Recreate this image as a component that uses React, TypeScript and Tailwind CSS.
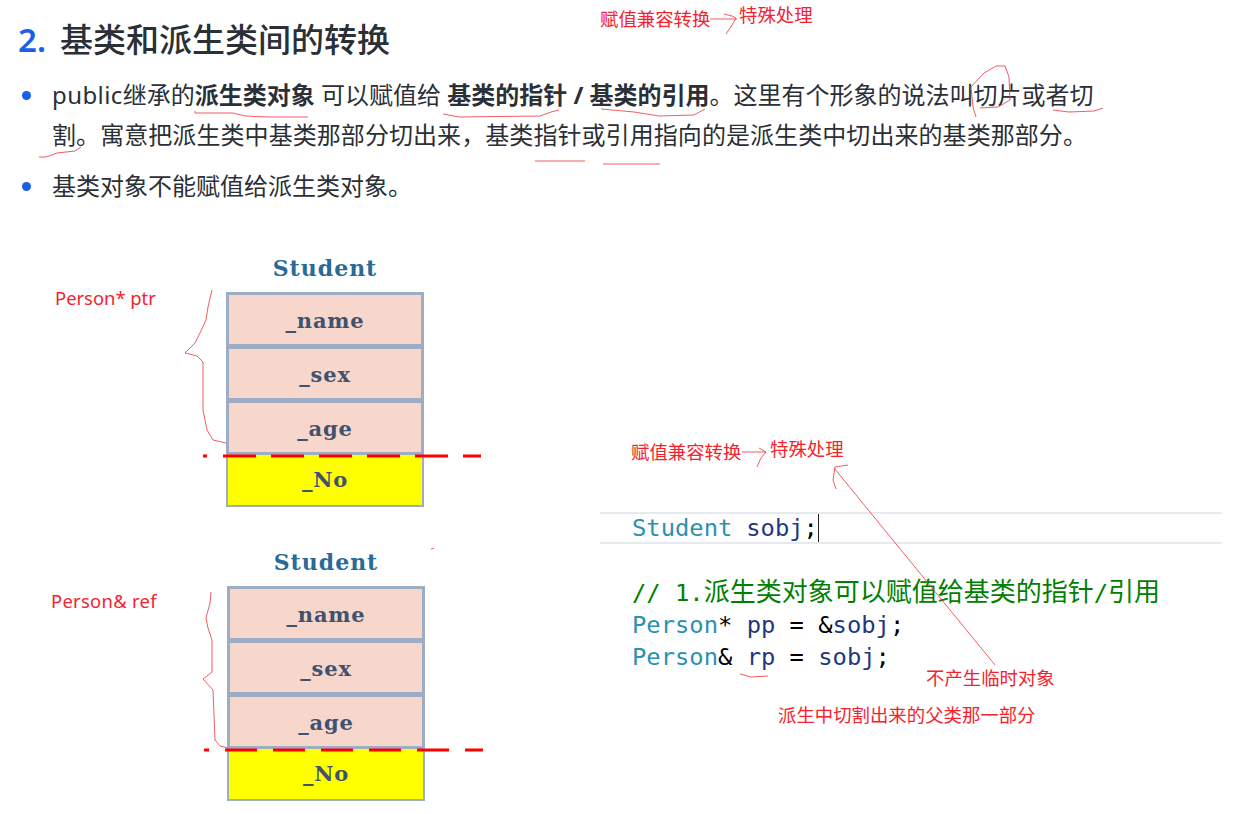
const cjk = '"Noto Sans", "Noto Sans CJK SC", sans-serif'

function StudentBox({ className }: { className: string }) {
  return (
    <div className={`flex w-[198px] flex-col font-['DejaVu_Serif',serif] font-bold ${className}`}>
      <div className="h-[26px] text-center text-[22px] leading-[26px] tracking-[1px] text-[#2a6a96]">Student</div>
      <div className="mt-[11px] flex flex-col text-[21px] tracking-[0.8px] text-[#3f5270]">
        {['_name', '_sex', '_age'].map((name) => (
          <div
            key={name}
            className="-mb-[1px] flex h-[55px] items-center justify-center border-[3px] border-[#9dadc3] bg-[#f7d6cb] pt-[2px]"
          >
            {name}
          </div>
        ))}
        <div className="mt-[1px] flex h-[52px] items-center justify-center border-2 border-t-0 border-[#9dadc3] bg-[#ffff00]">
          _No
        </div>
      </div>
    </div>
  )
}

function Note({ className, children }: { className: string; children: React.ReactNode }) {
  return (
    <span
      className={`absolute text-[18.4px] leading-[24px] whitespace-nowrap text-[#f5222d] ${className}`}
      style={{ fontFamily: cjk }}
    >
      {children}
    </span>
  )
}

export default function App() {
  return (
    <div className="relative h-[814px] w-[1242px] overflow-hidden bg-white text-[#2b2f36]" style={{ fontFamily: cjk }}>
      <h1 className="flex h-[60px] items-center pt-[20px] pl-[18px] text-[33px] leading-[40px] font-medium">
        <span className="w-[42px] font-semibold text-[#1a5fe8]">2.</span>
        基类和派生类间的转换
      </h1>

      <ul className="mt-[15px] flex flex-col gap-[11px] pl-[22px] text-[24px] leading-[40px]">
        <li className="flex">
          <span className="mt-[16px] h-[9px] w-[9px] shrink-0 rounded-full bg-[#1a5fe8]" />
          <p className="ml-[21px]">
            <span className="tracking-[0.4px]">public</span>继承的<b className="font-bold">派生类对象</b> 可以赋值给{' '}
            <b className="font-bold">基类的指针 / 基类的引用</b>
            。这里有个形象的说法叫切片或者切
            <br />
            <span className="tracking-[0.07px]">割。寓意把派生类中基类那部分切出来，基类指针或引用指向的是派生类中切出来的基类那部分。</span>
          </p>
        </li>
        <li className="flex">
          <span className="mt-[16px] h-[9px] w-[9px] shrink-0 rounded-full bg-[#1a5fe8]" />
          <p className="ml-[21px]">基类对象不能赋值给派生类对象。</p>
        </li>
      </ul>

      <div className="flex">
        <div className="ml-[226px] flex w-[374px] flex-col pt-[49px]">
          <StudentBox className="" />
          <StudentBox className="mt-[42px] ml-[1px]" />
        </div>
        <div className="w-[622px] pt-[306px]">
          <div className="flex h-[32px] items-stretch border-y-2 border-[#e8eaf2] pl-[32px] font-['DejaVu_Sans_Mono',monospace] text-[23.8px] leading-[28px]">
            <span className="text-[#2b91af]">Student</span>
            <span className="ml-[14px] text-[#1f377f]">sobj</span>
            <span className="border-r border-[#222] text-black">;</span>
          </div>
          <div className="mt-[30px] pl-[32px] font-['DejaVu_Sans_Mono',monospace] text-[23.8px] leading-[32px]">
            <div className="text-[#008000]">
              // 1.<span className="font-['Noto_Sans_CJK_SC'] text-[26px]">派生类对象可以赋值给基类的指针</span>/
              <span className="font-['Noto_Sans_CJK_SC'] text-[26px]">引用</span>
            </div>
            <div className="whitespace-pre text-black">
              <span className="text-[#2b91af]">Person</span>* <span className="text-[#1f377f]">pp</span> = &amp;
              <span className="text-[#1f377f]">sobj</span>;
            </div>
            <div className="whitespace-pre text-black">
              <span className="text-[#2b91af]">Person</span>&amp; <span className="text-[#1f377f]">rp</span> ={' '}
              <span className="text-[#1f377f]">sobj</span>;
            </div>
          </div>
        </div>
      </div>

      <Note className="top-[7px] left-[600px]">赋值兼容转换</Note>
      <Note className="top-[3px] left-[739px]">特殊处理</Note>
      <Note className="top-[440px] left-[631px]">赋值兼容转换</Note>
      <Note className="top-[437px] left-[770px]">特殊处理</Note>
      <Note className="top-[286px] left-[55px]">Person* ptr</Note>
      <Note className="top-[589px] left-[51px] tracking-[0.3px]">Person&amp; ref</Note>
      <Note className="top-[666px] left-[926px]">不产生临时对象</Note>
      <Note className="top-[703px] left-[778px]">派生中切割出来的父类那一部分</Note>

      {/* hand drawn pen marks on top of the page */}
      <svg className="pointer-events-none absolute top-0 left-0" width="1242" height="814" fill="none" stroke="#f0323c" strokeOpacity="0.8" strokeWidth="1">
        <path d="M195 111V113L233 113 245 116 268 117H308" />
        <path d="M443 114 459 117 540 116 551 112 559 110" />
        <path d="M601 109 634 112 659 116 694 115 705 109" />
        <path d="M976 117 973 107 971 87 984 73 996 66 1005 66 1009 77 1010 100 998 107 980 108" />
        <path d="M1053 110 1069 112 1094 111 1103 108" />
        <path d="M39 157 46 157 57 153 75 151 81 147" />
        <path d="M535 161H585M603 164H660" />
        <path d="M710 19H737M724 14 732 16 736 18 732 25 726 34" />
        <path d="M742 452H766M757 467 761 458 766 452 759 448" />
        <path d="M995 665 834 468M848 465 835 467 833 480 836 489" />
        <path d="M740 674 751 677 768 676" />
        <path d="M431 549 434 548" />
        <path d="M212 290 208 307 206 320 200 333 195 343 185 353 197 356 203 362V410L207 430 213 440 226 443" />
        <path d="M211 592 210 603 206 618 208 628 212 640V672L203 679 213 690 215 740 220 746 228 748" />
        <path d="M203 456H207M223 456H256M271 456H304M319 456H352M367 456H400M415 456H448M463 456H481" stroke="#ff0000" strokeOpacity="1" strokeWidth="3" />
        <path d="M204 750H209M225 750H257M273 750H305M321 750H353M369 750H401M417 750H449M465 750H483" stroke="#ff0000" strokeOpacity="1" strokeWidth="3" />
      </svg>
    </div>
  )
}
